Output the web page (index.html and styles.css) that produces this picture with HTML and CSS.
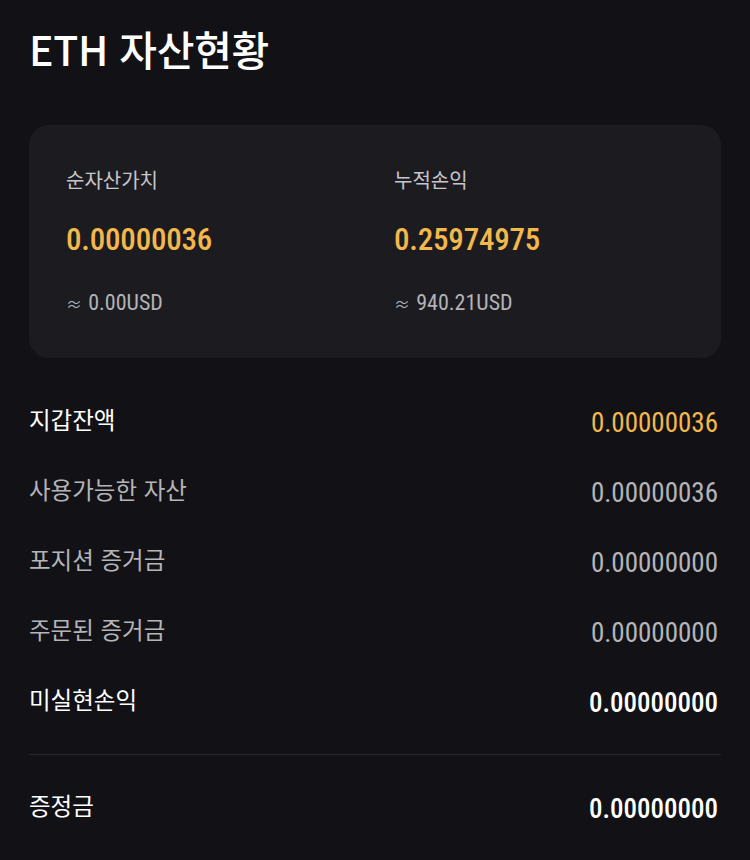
FILE: index.html
```html
<!DOCTYPE html>
<html lang="ko">
<head>
<meta charset="utf-8">
<link rel="stylesheet" href="styles.css">
</head>
<body>
<div class="page">
  <h1 class="title">ETH 자산현황</h1>
  <section class="card">
    <div class="stat">
      <div class="stat-label">순자산가치</div>
      <div class="stat-value num">0.00000036</div>
      <div class="stat-usd"><span class="approx">≈</span> <span class="num">0.00USD</span></div>
    </div>
    <div class="stat">
      <div class="stat-label">누적손익</div>
      <div class="stat-value num">0.25974975</div>
      <div class="stat-usd"><span class="approx">≈</span> <span class="num">940.21USD</span></div>
    </div>
  </section>
  <ul class="rows">
    <li class="row strong"><span class="row-label">지갑잔액</span><span class="row-value num gold">0.00000036</span></li>
    <li class="row"><span class="row-label">사용가능한 자산</span><span class="row-value num">0.00000036</span></li>
    <li class="row"><span class="row-label">포지션 증거금</span><span class="row-value num">0.00000000</span></li>
    <li class="row"><span class="row-label">주문된 증거금</span><span class="row-value num">0.00000000</span></li>
    <li class="row strong"><span class="row-label">미실현손익</span><span class="row-value num white">0.00000000</span></li>
  </ul>
  <hr class="divider">
  <ul class="rows rows-bottom">
    <li class="row strong"><span class="row-label">증정금</span><span class="row-value num white">0.00000000</span></li>
  </ul>
</div>
</body>
</html>
```
FILE: styles.css
```css
html, body {
  margin: 0;
  padding: 0;
  background: #121216;
}
body {
  font-family: "Noto Sans CJK KR", "Noto Sans", sans-serif;
  color: #ffffff;
}
.page {
  padding: 21px 29px 0 29px;
}
.num {
  font-family: "Roboto", "Liberation Sans", sans-serif;
  font-stretch: 85%;
}
.title {
  margin: 0;
  font-size: 41px;
  line-height: 54px;
  font-weight: 500;
  color: #ffffff;
  letter-spacing: -0.3px;
}
.card {
  margin-top: 50px;
  background: #1c1c20;
  border-radius: 20px;
  padding: 41px 37px 41px 37px;
  display: grid;
  grid-template-columns: 1fr 1fr;
  column-gap: 38px;
}
.stat-label {
  font-size: 20px;
  line-height: 28px;
  color: #c6c6cb;
}
.stat-value {
  margin-top: 28px;
  font-size: 31px;
  line-height: 36px;
  font-weight: 500;
  color: #f3b84c;
  letter-spacing: -0.2px;
}
.stat-usd {
  margin-top: 28px;
  font-size: 22px;
  line-height: 28px;
  color: #b3b3b8;
}
.approx {
  font-size: 16px;
}
.rows {
  list-style: none;
  margin: 28px 0 0 0;
  padding: 0;
}
.rows-bottom {
  margin-top: 17px;
}
.row {
  height: 70px;
  display: flex;
  align-items: center;
  justify-content: space-between;
}
.row-label {
  font-size: 23.5px;
  color: #b4b4b9;
  margin-bottom: 5px;
}
.row.strong .row-label {
  color: #ffffff;
  font-weight: 400;
}
.row-value {
  font-size: 27px;
  font-weight: 400;
  color: #b4b4b9;
  padding: 4px 3px 0 0;
}
.row-value.gold {
  color: #f3b84c;
}
.row-value.white {
  color: #ffffff;
  font-weight: 500;
}
.divider {
  margin: 18px 0 0 0;
  border: 0;
  height: 1px;
  background: #26262b;
}
```
